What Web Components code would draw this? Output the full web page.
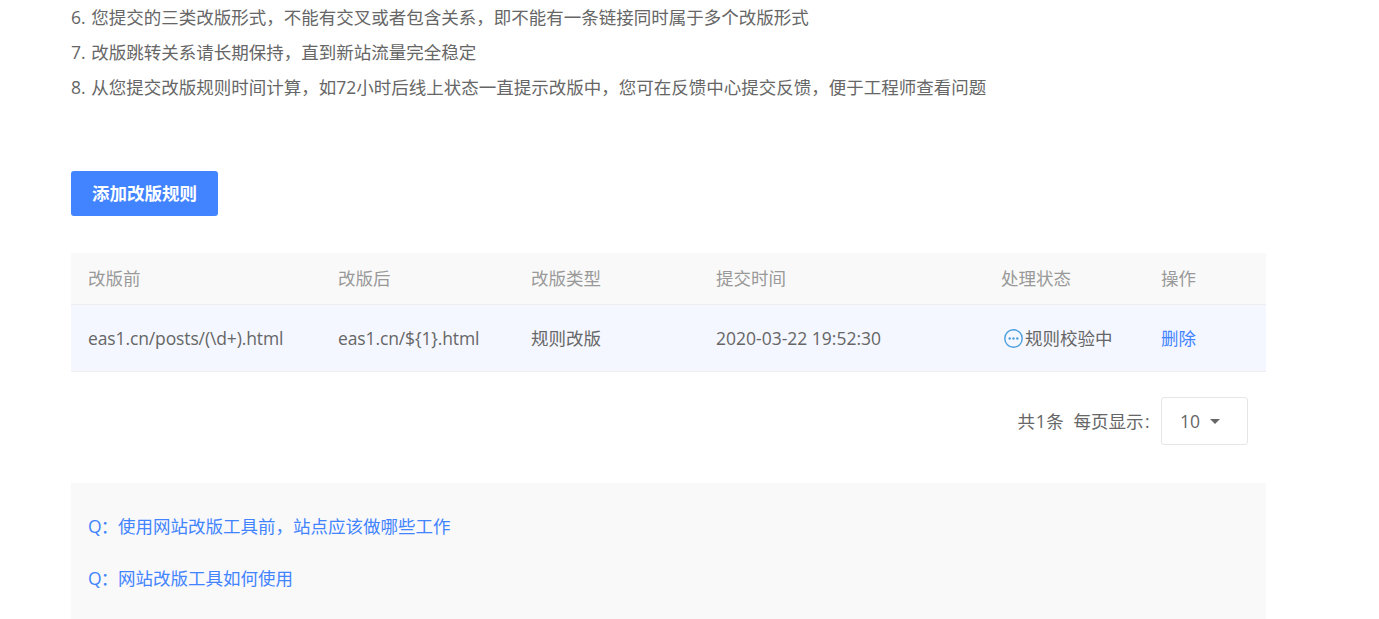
<!DOCTYPE html>
<html lang="zh-CN"><head><meta charset="utf-8"><title>网站改版</title>
<style>
html,body{margin:0;padding:0;background:#fff;height:619px;overflow:hidden}
body{font:17.5px/35px "Open Sans","Noto Sans CJK SC",sans-serif;color:#666}
.url{letter-spacing:-.12px}
.q{letter-spacing:-1px}
</style></head><body>
<template id="t-page"><style>
:host{display:block;width:1195px;margin-left:71px}
</style><slot></slot></template>

<template id="t-notes"><style>
:host{display:block;line-height:35px;color:#666;white-space:nowrap;word-spacing:1px}
</style><slot></slot></template>

<template id="t-btn"><style>
:host{display:flex;align-items:center;justify-content:center;box-sizing:border-box;width:147px;height:45px;margin-top:66px;background:#4284ff;border-radius:3px;color:#fff;font-weight:700;line-height:1}
</style><slot></slot></template>

<template id="t-table"><style>
:host{display:block;margin-top:37px}
</style><slot></slot></template>

<template id="t-row"><style>
:host{display:grid;grid-template-columns:250px 193px 185px 285px 160px 1fr;align-items:center;padding-left:17px;box-sizing:border-box;border-bottom:1px solid #eeeeee;white-space:nowrap}
:host([head]){height:52px;background:#f9f9f9;color:#999}
:host(:not([head])){height:67px;background:#f4f7ff;color:#666}
</style><slot></slot></template>

<template id="t-status"><style>
:host{display:flex;align-items:center;margin-left:3px}
svg{width:19px;height:19px;margin-right:2px;flex:none}
</style><svg viewBox="0 0 19 19" aria-hidden="true"><circle cx="9.5" cy="9.5" r="8.7" fill="none" stroke="#4a9fdc" stroke-width="1.4"/><circle cx="5.7" cy="9.5" r="1.2" fill="#4a9fdc"/><circle cx="9.5" cy="9.5" r="1.2" fill="#4a9fdc"/><circle cx="13.3" cy="9.5" r="1.2" fill="#4a9fdc"/></svg><slot></slot></template>

<template id="t-pager"><style>
:host{display:flex;justify-content:flex-end;align-items:center;height:48px;margin-top:25px;padding-right:18px;color:#666;white-space:nowrap}
.tot{letter-spacing:.6px}
.sp{width:9px}
.col{margin:0 1.5px}
.sel{display:flex;align-items:center;box-sizing:border-box;width:87px;height:48px;margin-left:10px;padding-left:18px;border:1px solid #e6e6e6;border-radius:3px}
.car{width:0;height:0;margin-left:10px;border:5px solid transparent;border-top-color:#666;border-bottom:0}
</style><span class="tot">共1条</span><span class="sp"></span><span>每页显示</span><span class="col">:</span><div class="sel"><span>10</span><span class="car"></span></div></template>

<template id="t-faq"><style>
:host{display:block;box-sizing:border-box;height:140px;margin-top:38px;padding:17px 17px 0;background:#f9f9f9;color:#4284ff;white-space:nowrap}
::slotted(*){display:block;line-height:52px}
</style><slot></slot></template>

<script>
const reg=(n,t)=>customElements.define(n,class extends HTMLElement{constructor(){super();this.attachShadow({mode:"open"}).appendChild(document.getElementById(t).content.cloneNode(true));}});
[["x-page","t-page"],["x-notes","t-notes"],["x-btn","t-btn"],["x-table","t-table"],["x-row","t-row"],["x-status","t-status"],["x-pager","t-pager"],["x-faq","t-faq"]].forEach(a=>reg(...a));
</script>

<x-page>
<x-notes>
<div>6. 您提交的三类改版形式，不能有交叉或者包含关系，即不能有一条链接同时属于多个改版形式</div>
<div>7. 改版跳转关系请长期保持，直到新站流量完全稳定</div>
<div>8. 从您提交改版规则时间计算，如72小时后线上状态一直提示改版中，您可在反馈中心提交反馈，便于工程师查看问题</div>
</x-notes>
<x-btn>添加改版规则</x-btn>
<x-table>
<x-row head><span>改版前</span><span>改版后</span><span>改版类型</span><span>提交时间</span><span>处理状态</span><span>操作</span></x-row>
<x-row><span class="url">eas1.cn/posts/(\d+).html</span><span class="url">eas1.cn/${1}.html</span><span>规则改版</span><span>2020-03-22 19:52:30</span><x-status>规则校验中</x-status><span style="color:#4284ff">删除</span></x-row>
</x-table>
<x-pager></x-pager>
<x-faq><span><span class="q">Q</span>：使用网站改版工具前，站点应该做哪些工作</span><span><span class="q">Q</span>：网站改版工具如何使用</span></x-faq>
</x-page>
</body></html>
